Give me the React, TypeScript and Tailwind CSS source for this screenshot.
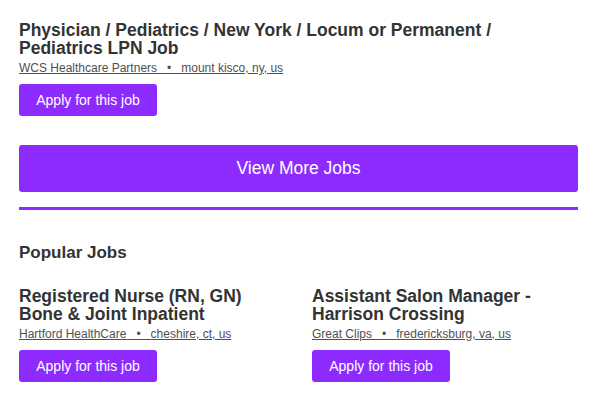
const font = { fontFamily: '"Liberation Sans", Arial, Helvetica, sans-serif' }

interface Job {
  title: string
  company: string
  location: string
}

const featured: Job = {
  title: 'Physician / Pediatrics / New York / Locum or Permanent / Pediatrics LPN Job',
  company: 'WCS Healthcare Partners',
  location: 'mount kisco, ny, us',
}

const popular: Job[] = [
  {
    title: 'Registered Nurse (RN, GN) Bone & Joint Inpatient',
    company: 'Hartford HealthCare',
    location: 'cheshire, ct, us',
  },
  {
    title: 'Assistant Salon Manager - Harrison Crossing',
    company: 'Great Clips',
    location: 'fredericksburg, va, us',
  },
]

function JobCard({ job }: { job: Job }) {
  return (
    <div className="flex flex-col items-start">
      <h3 className="text-[17.5px] leading-[18px] font-bold text-[#333333]">{job.title}</h3>
      <a href="#" className="mt-[3px] text-[12px] leading-[16px] text-[#505050] underline whitespace-pre">
        {job.company}   •   {job.location} 
      </a>
      <a
        href="#"
        className="mt-[8px] flex h-[32px] w-[138px] items-center justify-center rounded-[3px] bg-[#8d2bff] text-[14px] text-white"
      >
        Apply for this job
      </a>
    </div>
  )
}

export default function App() {
  return (
    <div className="min-h-[408px] bg-white pl-[19px] pr-[21px] pt-[21px]" style={font}>
      <JobCard job={featured} />

      <a
        href="#"
        className="mt-[29px] flex h-[47px] w-full items-center justify-center rounded-[3px] bg-[#8d2bff] text-[17.5px] text-white"
      >
        View More Jobs
      </a>

      <div className="mt-[15px] h-[3px] bg-[#8d2bff]" />

      <h2 className="mt-[33px] text-[17px] leading-[20px] font-bold text-[#333333]">Popular Jobs</h2>

      <div className="mt-[24px] grid grid-cols-2 gap-x-[27px]">
        {popular.map((job) => (
          <JobCard key={job.title} job={job} />
        ))}
      </div>
    </div>
  )
}
